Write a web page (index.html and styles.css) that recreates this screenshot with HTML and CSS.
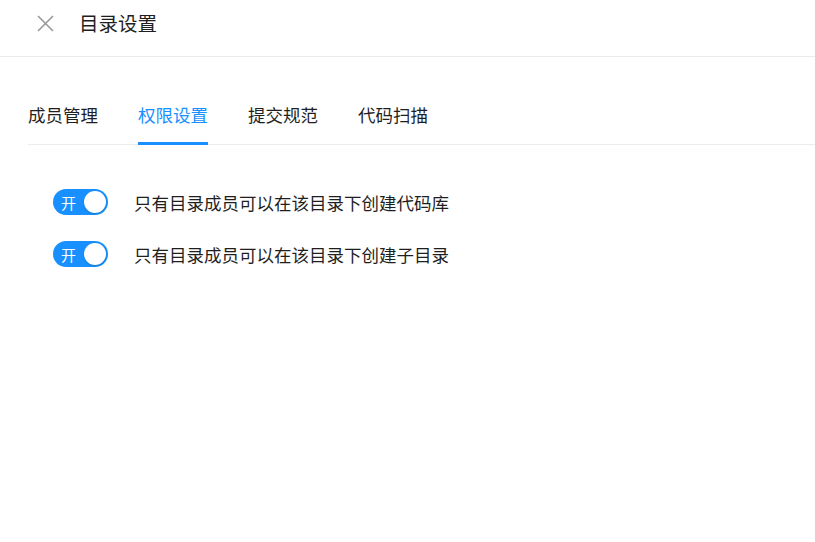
FILE: index.html
```html
<!DOCTYPE html>
<html lang="zh-CN">
<head>
    <meta charset="UTF-8">
    <title>目录设置</title>
    <link rel="stylesheet" href="styles.css">
</head>
<body>
    <div class="header">
        <svg class="close-icon" width="17" height="17" viewBox="0 0 17 17">
            <path d="M1 1 L16 16 M16 1 L1 16" stroke="#999" stroke-width="1.6" fill="none"/>
        </svg>
        <span class="title">目录设置</span>
    </div>

    <div class="content">
        <div class="tabs">
            <div class="tab">成员管理</div>
            <div class="tab active">权限设置</div>
            <div class="tab">提交规范</div>
            <div class="tab">代码扫描</div>
        </div>

        <div class="settings">
            <div class="setting-row">
                <span class="switch"><span class="switch-text">开</span><span class="switch-knob"></span></span>
                <span class="setting-label">只有目录成员可以在该目录下创建代码库</span>
            </div>
            <div class="setting-row">
                <span class="switch"><span class="switch-text">开</span><span class="switch-knob"></span></span>
                <span class="setting-label">只有目录成员可以在该目录下创建子目录</span>
            </div>
        </div>
    </div>
</body>
</html>
```

FILE: styles.css
```css
body {
    margin: 0;
    font-family: "Noto Sans CJK SC", "Noto Sans", sans-serif;
    color: #1f1f1f;
    background: #fff;
}

.header {
    height: 57px;
    display: flex;
    align-items: center;
    padding-left: 37px;
    border-bottom: 1px solid #ebebeb;
    box-sizing: border-box;
}

.close-icon {
    margin-right: 25px;
    margin-top: -10px;
}

.title {
    font-size: 19.5px;
    line-height: 1;
    margin-top: -11px;
}

.content {
    padding-left: 28px;
}

.tabs {
    display: flex;
    gap: 40px;
    border-bottom: 1px solid #ececec;
    margin-top: 44px;
}

.tab {
    font-size: 17.5px;
    line-height: 28px;
    padding-bottom: 13px;
    border-bottom: 3px solid transparent;
    margin-bottom: -1px;
}

.tab.active {
    color: #1890ff;
    border-bottom-color: #1890ff;
}

.settings {
    padding-left: 25px;
    padding-top: 31px;
}

.setting-row {
    display: flex;
    align-items: center;
    height: 52px;
}

.switch {
    width: 55px;
    height: 26px;
    border-radius: 13px;
    background: #1890ff;
    display: flex;
    align-items: center;
    justify-content: space-between;
    padding: 0 2px 0 8px;
    box-sizing: border-box;
}

.switch-text {
    color: #fff;
    font-size: 15px;
    line-height: 1;
}

.switch-knob {
    width: 22px;
    height: 22px;
    border-radius: 50%;
    background: #fff;
    box-shadow: 0 1px 2px rgba(0, 35, 11, 0.2);
}

.setting-label {
    font-size: 17.5px;
    margin-left: 26px;
}
```
